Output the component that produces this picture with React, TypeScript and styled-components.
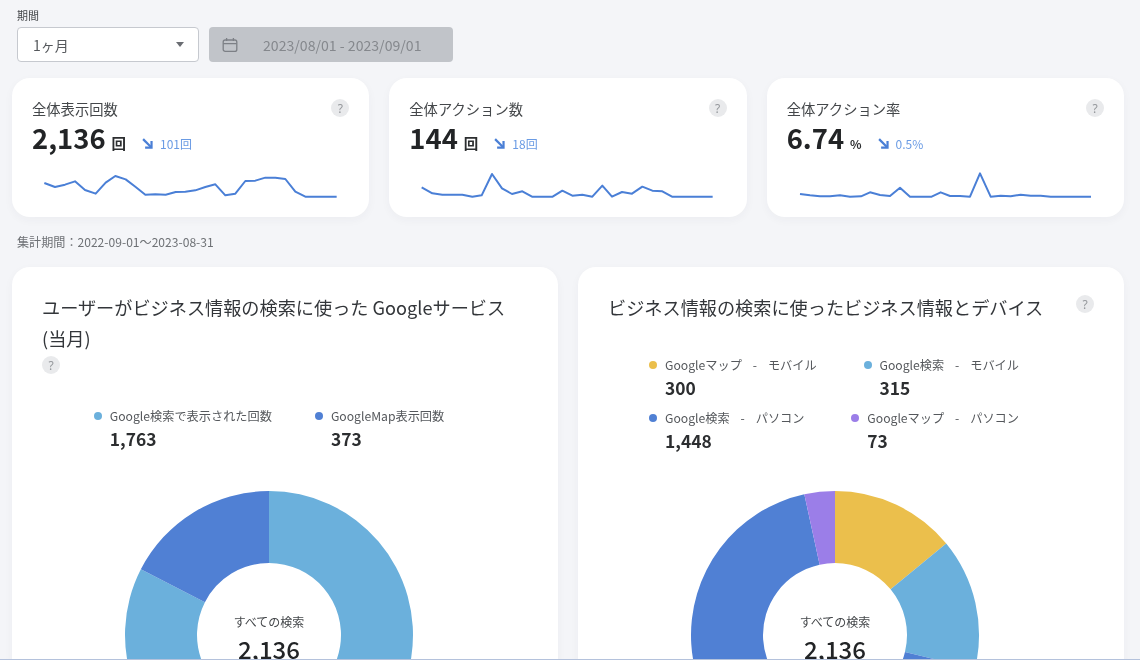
import styled, { createGlobalStyle } from "styled-components";

const GlobalStyle = createGlobalStyle`
  html, body {
    margin: 0;
    padding: 0;
    background: #f3f4f7;
    font-family: "Noto Sans CJK JP", "Noto Sans", sans-serif;
    color: #222426;
  }
  * {
    box-sizing: border-box;
  }
`;

const Page = styled.div`
  width: 1140px;
  height: 660px;
  overflow: hidden;
  padding: 8px 16px 0 12px;
  background: #f4f5f8;
  border-bottom: 1px solid #b4c2dc;
  filter: blur(0.35px);
`;

const FilterBlock = styled.div`
  padding-left: 5px;
`;

const FilterLabel = styled.div`
  font-size: 11px;
  line-height: 15px;
  color: #44474a;
  margin-bottom: 4px;
`;

const FilterRow = styled.div`
  display: flex;
  gap: 10px;
`;

const SelectBox = styled.div`
  width: 182px;
  height: 35px;
  display: flex;
  align-items: center;
  justify-content: space-between;
  padding: 0 14px 0 15px;
  background: #ffffff;
  border: 1px solid #c6c9cf;
  border-radius: 4px;
  font-size: 14px;
  color: #55585c;
`;

const Caret = styled.span`
  width: 0;
  height: 0;
  border-left: 4.5px solid transparent;
  border-right: 4.5px solid transparent;
  border-top: 5px solid #6a6d72;
`;

const DateBox = styled.div`
  width: 244px;
  height: 35px;
  display: flex;
  align-items: center;
  gap: 25px;
  padding-left: 13px;
  background: #c1c4c9;
  border-radius: 4px;
  font-size: 14.1px;
  color: #85888d;
`;

const StatRow = styled.div`
  display: flex;
  gap: 20px;
  margin-top: 16px;
`;

const StatCard = styled.div`
  flex: 1;
  min-width: 0;
  height: 139px;
  padding: 19px 20px 0;
  background: #ffffff;
  border-radius: 18px;
  box-shadow: 0 3px 10px rgba(40, 50, 80, 0.04);
`;

const StatHead = styled.div`
  display: flex;
  align-items: center;
  justify-content: space-between;
  height: 22px;
  font-size: 14.3px;
  color: #44474a;
`;

const HelpDot = styled.span`
  flex: none;
  display: inline-flex;
  align-items: center;
  justify-content: center;
  width: 18px;
  height: 18px;
  border-radius: 50%;
  background: #e9eaec;
  color: #94979b;
  font-size: 12px;
  font-family: "Noto Sans", sans-serif;
`;

const StatValueRow = styled.div`
  display: flex;
  align-items: baseline;
  height: 36px;
  line-height: 36px;
  margin-bottom: 13px;
`;

const StatValue = styled.span`
  font-size: 27.4px;
  font-weight: 700;
  color: #222426;
`;

const StatUnit = styled.span<{ $small?: boolean }>`
  font-size: ${(p) => (p.$small ? "12px" : "14.5px")};
  font-weight: 700;
  margin-left: 6px;
  color: #2c2e30;
`;

const Trend = styled.span`
  display: inline-flex;
  align-items: center;
  gap: 7px;
  margin-left: 16px;
  font-size: 12px;
  color: #6a9be4;
`;

const Spark = styled.svg`
  display: block;
  width: 325px;
  height: 40px;
`;

const PeriodNote = styled.div`
  margin: 16px 0 17px 5px;
  font-size: 12.1px;
  line-height: 17px;
  color: #6e7175;
`;

const ChartRow = styled.div`
  display: flex;
  gap: 20px;
`;

const ChartCard = styled.div`
  flex: 1;
  height: 420px;
  padding: 25px 30px 0;
  background: #ffffff;
  border-radius: 18px;
  box-shadow: 0 3px 10px rgba(40, 50, 80, 0.04);
`;

const ChartHead = styled.div`
  display: flex;
  justify-content: space-between;
  min-height: 31px;
`;

const ChartTitle = styled.div`
  font-size: 18.16px;
  line-height: 31px;
  color: #33363a;
`;

const ChartHelp = styled(HelpDot)`
  margin-top: 3px;
`;

const InlineHelp = styled(HelpDot)`
  display: flex;
  margin-top: 2px;
`;

const ChartBody = styled.div<{ $top: number }>`
  position: relative;
  width: 454px;
  padding-top: ${(p) => p.$top}px;
`;

const LegendRow = styled.div<{ $spread?: boolean }>`
  display: flex;
  justify-content: ${(p) => (p.$spread ? "space-between" : "center")};
  gap: ${(p) => (p.$spread ? "20px" : "43px")};
  padding: ${(p) => (p.$spread ? "0 43px 0 41px" : "0")};
  margin-bottom: 8px;
`;

const LegendItem = styled.div`
  display: grid;
  grid-template-columns: 8px auto;
  column-gap: 8px;
  align-items: center;
`;

const LegendDot = styled.span<{ $color: string }>`
  width: 8px;
  height: 8px;
  border-radius: 50%;
  background: ${(p) => p.$color};
`;

const LegendLabel = styled.span`
  font-size: 12.2px;
  line-height: 20px;
  white-space: pre;
  color: #55585c;
`;

const LegendValue = styled.span`
  grid-column: 2;
  font-size: 17.4px;
  font-weight: 700;
  line-height: 25px;
  color: #2c2e30;
`;

const DonutWrap = styled.div<{ $top: number }>`
  position: relative;
  width: 290px;
  height: 290px;
  margin: ${(p) => p.$top}px auto 0;
`;

const DonutCenter = styled.div`
  position: absolute;
  top: 122px;
  left: 0;
  right: 0;
  text-align: center;
`;

const CenterLabel = styled.div`
  font-size: 12px;
  line-height: 20px;
  color: #44474a;
`;

const CenterValue = styled.div`
  font-size: 24px;
  font-weight: 500;
  line-height: 34px;
  color: #222426;
`;

const LEFT_SPARK =
  "37,45 69,57 99,50 129,40 159,66 191,77 221,44 250,24 281,34 311,57 340,80 370,79 401,80 431,72 460,71 490,67 520,57 550,49 580,82 610,77 640,39 670,38 700,29 730,29 760,33 790,71 820,86 850,86 880,86 914,86";
const MIDDLE_SPARK =
  "38,58 70,76 100,80 130,80 160,80 190,86 218,82 249,18 279,61 309,78 340,70 369,86 399,86 431,86 460,68 490,83 520,80 550,86 580,53 609,86 639,72 669,77 700,56 730,68 760,70 789,86 819,86 849,86 879,86 911,86";
const RIGHT_SPARK =
  "39,78 69,82 99,85 129,85 159,82 189,86 222,85 249,73 279,81 309,84 339,59 369,86 401,86 434,86 461,73 489,84 519,84 549,86 579,16 611,86 641,83 671,85 701,80 731,83 761,83 791,86 821,86 851,86 881,86 912,86";

const stats = [
  { title: "全体表示回数", value: "2,136", unit: "回", delta: "101回", points: LEFT_SPARK },
  { title: "全体アクション数", value: "144", unit: "回", delta: "18回", points: MIDDLE_SPARK },
  { title: "全体アクション率", value: "6.74", unit: "%", delta: "0.5%", points: RIGHT_SPARK },
];

const LIGHT = "#6bb0dc";
const BLUE = "#5080d4";
const YELLOW = "#ebbf4c";
const PURPLE = "#9b7ee8";

const polar = (r: number, deg: number) => {
  const a = (deg * Math.PI) / 180;
  return `${145 + r * Math.sin(a)} ${145 - r * Math.cos(a)}`;
};

const slicePath = (from: number, to: number) => {
  const large = to - from > 180 ? 1 : 0;
  return `M${polar(144, from)} A144 144 0 ${large} 1 ${polar(144, to)} L${polar(72, to)} A72 72 0 ${large} 0 ${polar(72, from)} Z`;
};

const Donut = ({ parts }: { parts: { value: number; color: string }[] }) => {
  const total = parts.reduce((sum, part) => sum + part.value, 0);
  let angle = 0;
  return (
    <svg width="290" height="290" viewBox="0 0 290 290">
      {parts.map((part, i) => {
        const from = angle;
        angle += (part.value / total) * 360;
        return <path key={i} d={slicePath(from, angle)} fill={part.color} />;
      })}
    </svg>
  );
};

const DownArrow = () => (
  <svg width="11" height="11" viewBox="0 0 12 12" fill="none" stroke="#4a7fd6" strokeWidth="2.4">
    <path d="M1.2 1.2 L10 10" />
    <path d="M10.4 3.4 V10.4 H3.4" />
  </svg>
);

const CalendarIcon = () => (
  <svg width="16" height="16" viewBox="0 0 16 16" fill="none" stroke="#7d8086" strokeWidth="1.3">
    <rect x="1.2" y="3" width="13.6" height="11.4" rx="2" />
    <path d="M1.2 6.6 H14.8 M4.6 1 V4 M11.4 1 V4" />
  </svg>
);

const Legend = ({ color, label, value }: { color: string; label: string; value: string }) => (
  <LegendItem>
    <LegendDot $color={color} />
    <LegendLabel>{label}</LegendLabel>
    <LegendValue>{value}</LegendValue>
  </LegendItem>
);

const App = () => {
  return (
    <Page>
      <GlobalStyle />
      <FilterBlock>
        <FilterLabel>期間</FilterLabel>
        <FilterRow>
          <SelectBox>
            1ヶ月
            <Caret />
          </SelectBox>
          <DateBox>
            <CalendarIcon />
            2023/08/01 - 2023/09/01
          </DateBox>
        </FilterRow>
      </FilterBlock>

      <StatRow>
        {stats.map((stat) => (
          <StatCard key={stat.title}>
            <StatHead>
              {stat.title}
              <HelpDot>?</HelpDot>
            </StatHead>
            <StatValueRow>
              <StatValue>{stat.value}</StatValue>
              <StatUnit $small={stat.unit === "%"}>{stat.unit}</StatUnit>
              <Trend>
                <DownArrow />
                {stat.delta}
              </Trend>
            </StatValueRow>
            <Spark viewBox="0 0 975 120">
              <polyline points={stat.points} fill="none" stroke="#4a7fd6" strokeWidth="6" strokeLinejoin="round" />
            </Spark>
          </StatCard>
        ))}
      </StatRow>

      <PeriodNote>集計期間：2022-09-01〜2023-08-31</PeriodNote>

      <ChartRow>
        <ChartCard>
          <ChartTitle>
            ユーザーがビジネス情報の検索に使った Googleサービス
            <br />
            (当月)
          </ChartTitle>
          <InlineHelp>?</InlineHelp>
          <ChartBody $top={32}>
            <LegendRow>
              <Legend color={LIGHT} label="Google検索で表示された回数" value="1,763" />
              <Legend color={BLUE} label="GoogleMap表示回数" value="373" />
            </LegendRow>
            <DonutWrap $top={39}>
              <Donut parts={[{ value: 1763, color: LIGHT }, { value: 373, color: BLUE }]} />
              <DonutCenter>
                <CenterLabel>すべての検索</CenterLabel>
                <CenterValue>2,136</CenterValue>
              </DonutCenter>
            </DonutWrap>
          </ChartBody>
        </ChartCard>

        <ChartCard>
          <ChartHead>
            <ChartTitle>ビジネス情報の検索に使ったビジネス情報とデバイス</ChartTitle>
            <ChartHelp>?</ChartHelp>
          </ChartHead>
          <ChartBody $top={32}>
            <LegendRow $spread>
              <Legend color={YELLOW} label="Googleマップ    -    モバイル" value="300" />
              <Legend color={LIGHT} label="Google検索    -    モバイル" value="315" />
            </LegendRow>
            <LegendRow $spread>
              <Legend color={BLUE} label="Google検索    -    パソコン" value="1,448" />
              <Legend color={PURPLE} label="Googleマップ    -    パソコン" value="73" />
            </LegendRow>
            <DonutWrap $top={37}>
              <Donut
                parts={[
                  { value: 300, color: YELLOW },
                  { value: 315, color: LIGHT },
                  { value: 1448, color: BLUE },
                  { value: 73, color: PURPLE },
                ]}
              />
              <DonutCenter>
                <CenterLabel>すべての検索</CenterLabel>
                <CenterValue>2,136</CenterValue>
              </DonutCenter>
            </DonutWrap>
          </ChartBody>
        </ChartCard>
      </ChartRow>
    </Page>
  );
};

export default App;
